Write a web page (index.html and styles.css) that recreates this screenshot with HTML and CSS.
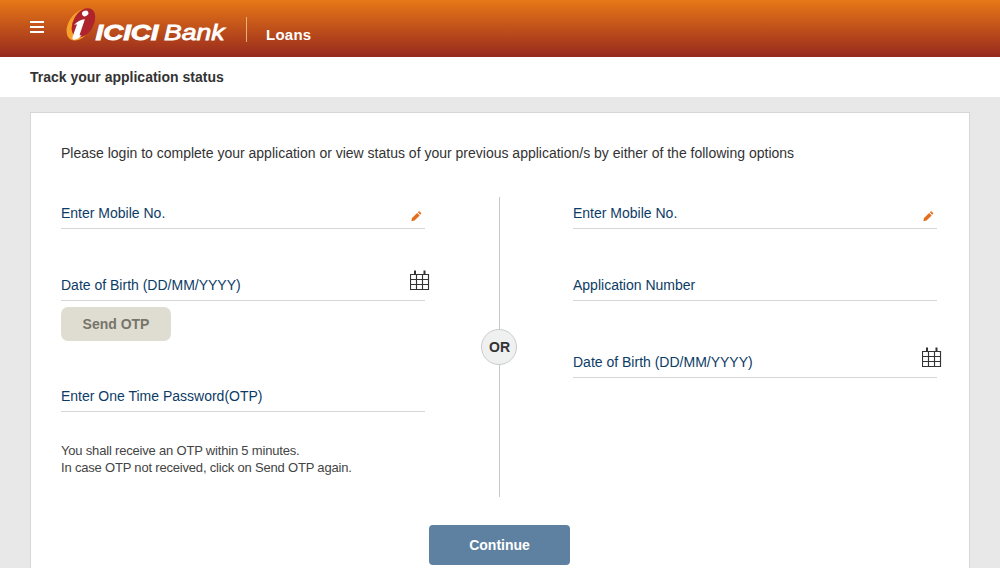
FILE: index.html
```
<!DOCTYPE html>
<html lang="en">
<head>
<meta charset="utf-8">
<title>Track your application status</title>
<link rel="stylesheet" href="styles.css">
</head>
<body>
<svg class="defs" width="0" height="0">
  <symbol id="calendar" viewBox="0 0 20 21">
    <path d="M.5 4.5h18v15H.5zM.5 9.5h18M.5 14.5h18M6.5 4.5v15M12.5 4.5v15" fill="none" stroke="#333" stroke-width="1.15"/>
    <path d="M4 .5h2v4H4zM13.5 .5h2v4h-2z" fill="#333"/>
  </symbol>
  <symbol id="pencil" viewBox="0 0 11 11">
    <path d="M.3 10.3 1 7.1 6.2 1.9 8.7 4.4 3.5 9.6zM6.8 1.3 7.6.5Q8.1.1 8.6.6L10 2Q10.5 2.5 10 3L9.3 3.8z" fill="#e36f1e"/>
  </symbol>
</svg>
<header class="topbar">
  <div class="menu"><span></span><span></span><span></span></div>
  <svg class="logo" width="162" height="36" viewBox="0 0 162 36">
    <ellipse cx="14" cy="16.8" rx="11.2" ry="17.4" transform="rotate(34 14 16.8)" fill="#f9a02b"/>
    <ellipse cx="17.4" cy="14.8" rx="10.2" ry="15.8" transform="rotate(30 17.4 14.8)" fill="#ae242d"/>
    <ellipse cx="19.2" cy="5.4" rx="3.3" ry="2.7" transform="rotate(-30 19.2 5.4)" fill="#fff"/>
    <path d="M8 17Q12.5 11.7 18.9 11.2L13.8 26.2Q13.3 28.5 15.8 26.8Q12.8 31.6 8 31.7Q5.7 31.5 6.7 28.5L11 16.2Q9.6 16.2 8 17Z" fill="#fff"/>
    <text class="logo-bold" x="29.5" y="31.7" textLength="63" lengthAdjust="spacingAndGlyphs">ICICI</text>
    <text class="logo-light" x="98" y="31.7" textLength="60.5" lengthAdjust="spacingAndGlyphs">Bank</text>
  </svg>
  <div class="product">Loans</div>
</header>
<h1 class="title">Track your application status</h1>
<main class="card">
  <p class="intro">Please login to complete your application or view status of your previous application/s by either of the following options</p>
  <div class="options">
    <section class="option">
      <div class="field"><label>Enter Mobile No.</label><svg class="pencil"><use href="#pencil"/></svg></div>
      <div class="field dob"><label>Date of Birth (DD/MM/YYYY)</label><svg class="calendar"><use href="#calendar"/></svg></div>
      <button class="send">Send OTP</button>
      <div class="field otp"><label>Enter One Time Password(OTP)</label></div>
      <p class="note">You shall receive an OTP within 5 minutes.<br>In case OTP not received, click on Send OTP again.</p>
    </section>
    <div class="divider"><span class="or">OR</span></div>
    <section class="option">
      <div class="field"><label>Enter Mobile No.</label><svg class="pencil"><use href="#pencil"/></svg></div>
      <div class="field dob"><label>Application Number</label></div>
      <div class="field dob-late"><label>Date of Birth (DD/MM/YYYY)</label><svg class="calendar"><use href="#calendar"/></svg></div>
    </section>
  </div>
  <button class="continue">Continue</button>
</main>
</body>
</html>
```
FILE: styles.css
```
* { box-sizing: border-box; }
body {
  margin: 0;
  height: 568px;
  background: #e8e8e8;
  color: #333;
  font: 14px/20px "Liberation Sans", Arial, sans-serif;
}
.defs { position: absolute; }
.topbar {
  display: flex;
  align-items: flex-start;
  height: 57px;
  padding-left: 30px;
  background: linear-gradient(#e77817, #97291e);
}
.menu {
  display: grid;
  gap: 3px;
  width: 14px;
  margin-top: 21px;
}
.menu span { height: 2px; background: #fff; }
.logo { margin: 8px 0 0 22px; overflow: visible; }
.logo-bold, .logo-light {
  font-family: "Liberation Sans", Arial, sans-serif;
  font-style: italic;
  font-weight: bold;
  font-size: 22px;
  fill: #fff;
}
.logo-bold { stroke: #fff; stroke-width: .9px; }
.logo-light { font-weight: normal; stroke: #fff; stroke-width: .8px; }
.product {
  height: 25px;
  margin: 17px 0 0 18px;
  padding: 8px 0 0 19px;
  border-left: 1px solid #eab078;
  color: #fff;
  font-size: 15px;
  font-weight: bold;
  line-height: 19px;
  letter-spacing: .25px;
}
.title {
  height: 40px;
  margin: 0;
  padding-left: 30px;
  background: #fff;
  font-size: 14px;
  line-height: 40px;
}
.card {
  height: 456px;
  margin: 15px 30px 0;
  padding: 30px 30px 0;
  background: #fff;
  border: 1px solid #d6d6d6;
  border-bottom: 0;
}
.intro { margin: 0; white-space: nowrap; }
.options {
  display: grid;
  grid-template-columns: 364px 148px 364px;
  height: 300px;
  margin-top: 34px;
}
.field {
  display: flex;
  justify-content: space-between;
  height: 32px;
  border-bottom: 1px solid #d4d6d9;
  color: #0c3c66;
  line-height: 32px;
}
.pencil { width: 11px; height: 11px; margin: 13.5px 3.5px 0 0; }
.calendar { width: 20px; height: 21px; margin: 1px -5px 0 0; }
.dob { margin-top: 40px; }
.dob-late { margin-top: 45px; }
.send, .continue {
  display: block;
  padding: 0;
  border: 0;
  font: bold 14px/34px "Liberation Sans", Arial, sans-serif;
}
.send {
  width: 110px;
  height: 34px;
  margin-top: 6px;
  border-radius: 7px;
  background: #dfddd1;
  color: #77746b;
}
.otp { margin-top: 39px; }
.note {
  margin: 30px 0 0;
  color: #444;
  font-size: 13px;
  line-height: 17px;
  letter-spacing: -.19px;
}
.divider {
  display: grid;
  place-items: center;
  background: linear-gradient(#c9c9c9, #c9c9c9) 74px 0 / 1px 100% no-repeat;
}
.or {
  width: 36px;
  height: 36px;
  padding-left: 1px;
  border: 1px solid #cbcbcb;
  border-radius: 50%;
  background: #eff0f0;
  font-weight: bold;
  line-height: 34px;
  text-align: center;
}
.continue {
  width: 141px;
  height: 40px;
  margin: 28px 0 0 368px;
  border-radius: 4px;
  background: #5e81a1;
  color: #fff;
  line-height: 40px;
}
```
